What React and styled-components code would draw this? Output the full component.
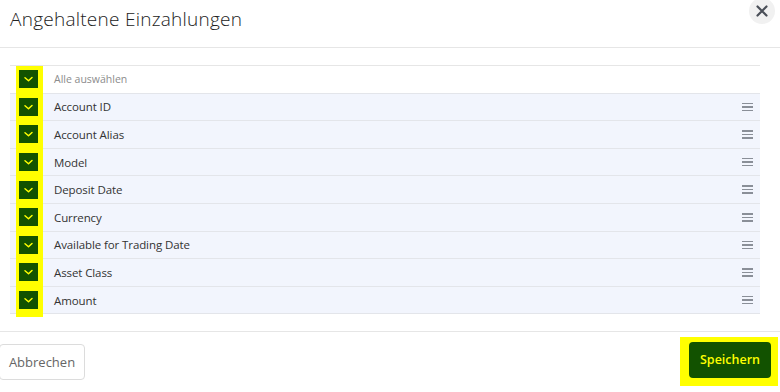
import React, { useState } from "react";
import styled, { createGlobalStyle } from "styled-components";

const GlobalStyle = createGlobalStyle`
  html, body {
    margin: 0;
    padding: 0;
    background: #ffffff;
    font-family: "Open Sans", "Liberation Sans", Arial, sans-serif;
  }
  * { box-sizing: border-box; }
`;

const Modal = styled.div`
  width: 780px;
  height: 392px;
  display: flex;
  flex-direction: column;
  background: #fff;
  overflow: hidden;
`;

const Header = styled.div`
  height: 48px;
  display: flex;
  justify-content: space-between;
  align-items: flex-start;
  border-bottom: 1px solid #e6e6e6;
  padding: 0 5px 0 10px;
`;

const Title = styled.h2`
  margin: 6px 0 0;
  font-size: 19px;
  font-weight: 300;
  color: #222;
  letter-spacing: 0.25px;
`;

const CloseButton = styled.button`
  width: 26px;
  height: 26px;
  margin-top: -2px;
  border: none;
  border-radius: 50%;
  background: #f1f1f1;
  display: flex;
  align-items: center;
  justify-content: center;
  padding: 0;
  cursor: pointer;
`;

const Body = styled.div`
  flex: 1;
  padding: 17px 20px 0 10px;
`;

const List = styled.div`
  position: relative;
  border-top: 1px solid #e6e6e6;

  &::before {
    content: "";
    position: absolute;
    left: 6px;
    top: 0;
    width: 27px;
    bottom: -3px;
    background: #ffff00;
  }
`;

const Row = styled.div`
  display: flex;
  align-items: center;
  height: 27.6px;
  border-bottom: 1px solid #e3e5ea;
  background: ${(p) => (p.head ? "#ffffff" : "#f2f5fd")};
`;

const Check = styled.button`
  position: relative;
  z-index: 1;
  width: 19px;
  height: 18px;
  margin-left: 9px;
  border: none;
  padding: 0;
  background: #125200;
  display: flex;
  align-items: center;
  justify-content: center;
  cursor: pointer;
`;

const Label = styled.span`
  flex: 1;
  margin-left: 16px;
  font-size: ${(p) => (p.head ? "10.5px" : "11.5px")};
  color: ${(p) => (p.head ? "#8c8c8c" : "#333")};
  letter-spacing: ${(p) => (p.head ? "0" : "-0.1px")};
`;

const Handle = styled.span`
  width: 11px;
  margin-right: 7px;
  display: flex;
  flex-direction: column;
  gap: 2px;

  & > i {
    display: block;
    height: 1.5px;
    background: #8a8f98;
  }
`;

const Footer = styled.div`
  height: 61px;
  border-top: 1px solid #e6e6e6;
  display: flex;
  justify-content: space-between;
  align-items: center;
  padding: 0 2px 0 0;
`;

const CancelButton = styled.button`
  height: 36px;
  width: 86px;
  border: 1px solid #dcdcdc;
  border-radius: 4px;
  background: #fff;
  color: #666;
  font-family: inherit;
  font-size: 13px;
  margin-left: -1px;
  cursor: pointer;
`;

const Highlight = styled.div`
  background: #ffff00;
  padding: 5px 7px 8px 9px;
  margin-top: -2px;
`;

const SaveButton = styled.button`
  height: 36px;
  width: 82px;
  border: none;
  border-radius: 4px;
  background: #125200;
  color: #ffff00;
  font-family: inherit;
  font-weight: 600;
  font-size: 12.5px;
  cursor: pointer;
`;

const CheckIcon = () => (
  <svg width="11" height="8" viewBox="0 0 11 8">
    <path d="M2 2.8 L5.5 5.8 L9 2.5" fill="none" stroke="#ffff00" strokeWidth="1.5" strokeLinecap="round" strokeLinejoin="round" />
  </svg>
);

const columns = [
  "Account ID",
  "Account Alias",
  "Model",
  "Deposit Date",
  "Currency",
  "Available for Trading Date",
  "Asset Class",
  "Amount",
];

export default function App() {
  const [checked] = useState(columns.map(() => true));

  return (
    <>
      <GlobalStyle />
      <Modal>
        <Header>
          <Title>Angehaltene Einzahlungen</Title>
          <CloseButton aria-label="close">
            <svg width="12" height="12" viewBox="0 0 12 12">
              <path d="M1.5 1.5 L10.5 10.5 M10.5 1.5 L1.5 10.5" stroke="#4a4f58" strokeWidth="2.2" strokeLinecap="round" />
            </svg>
          </CloseButton>
        </Header>
        <Body>
          <List>
            <Row head>
              <Check>
                <CheckIcon />
              </Check>
              <Label head>Alle auswählen</Label>
            </Row>
            {columns.map((c, i) => (
              <Row key={c}>
                <Check>{checked[i] && <CheckIcon />}</Check>
                <Label>{c}</Label>
                <Handle>
                  <i />
                  <i />
                  <i />
                </Handle>
              </Row>
            ))}
          </List>
        </Body>
        <Footer>
          <CancelButton>Abbrechen</CancelButton>
          <Highlight>
            <SaveButton>Speichern</SaveButton>
          </Highlight>
        </Footer>
      </Modal>
    </>
  );
}
